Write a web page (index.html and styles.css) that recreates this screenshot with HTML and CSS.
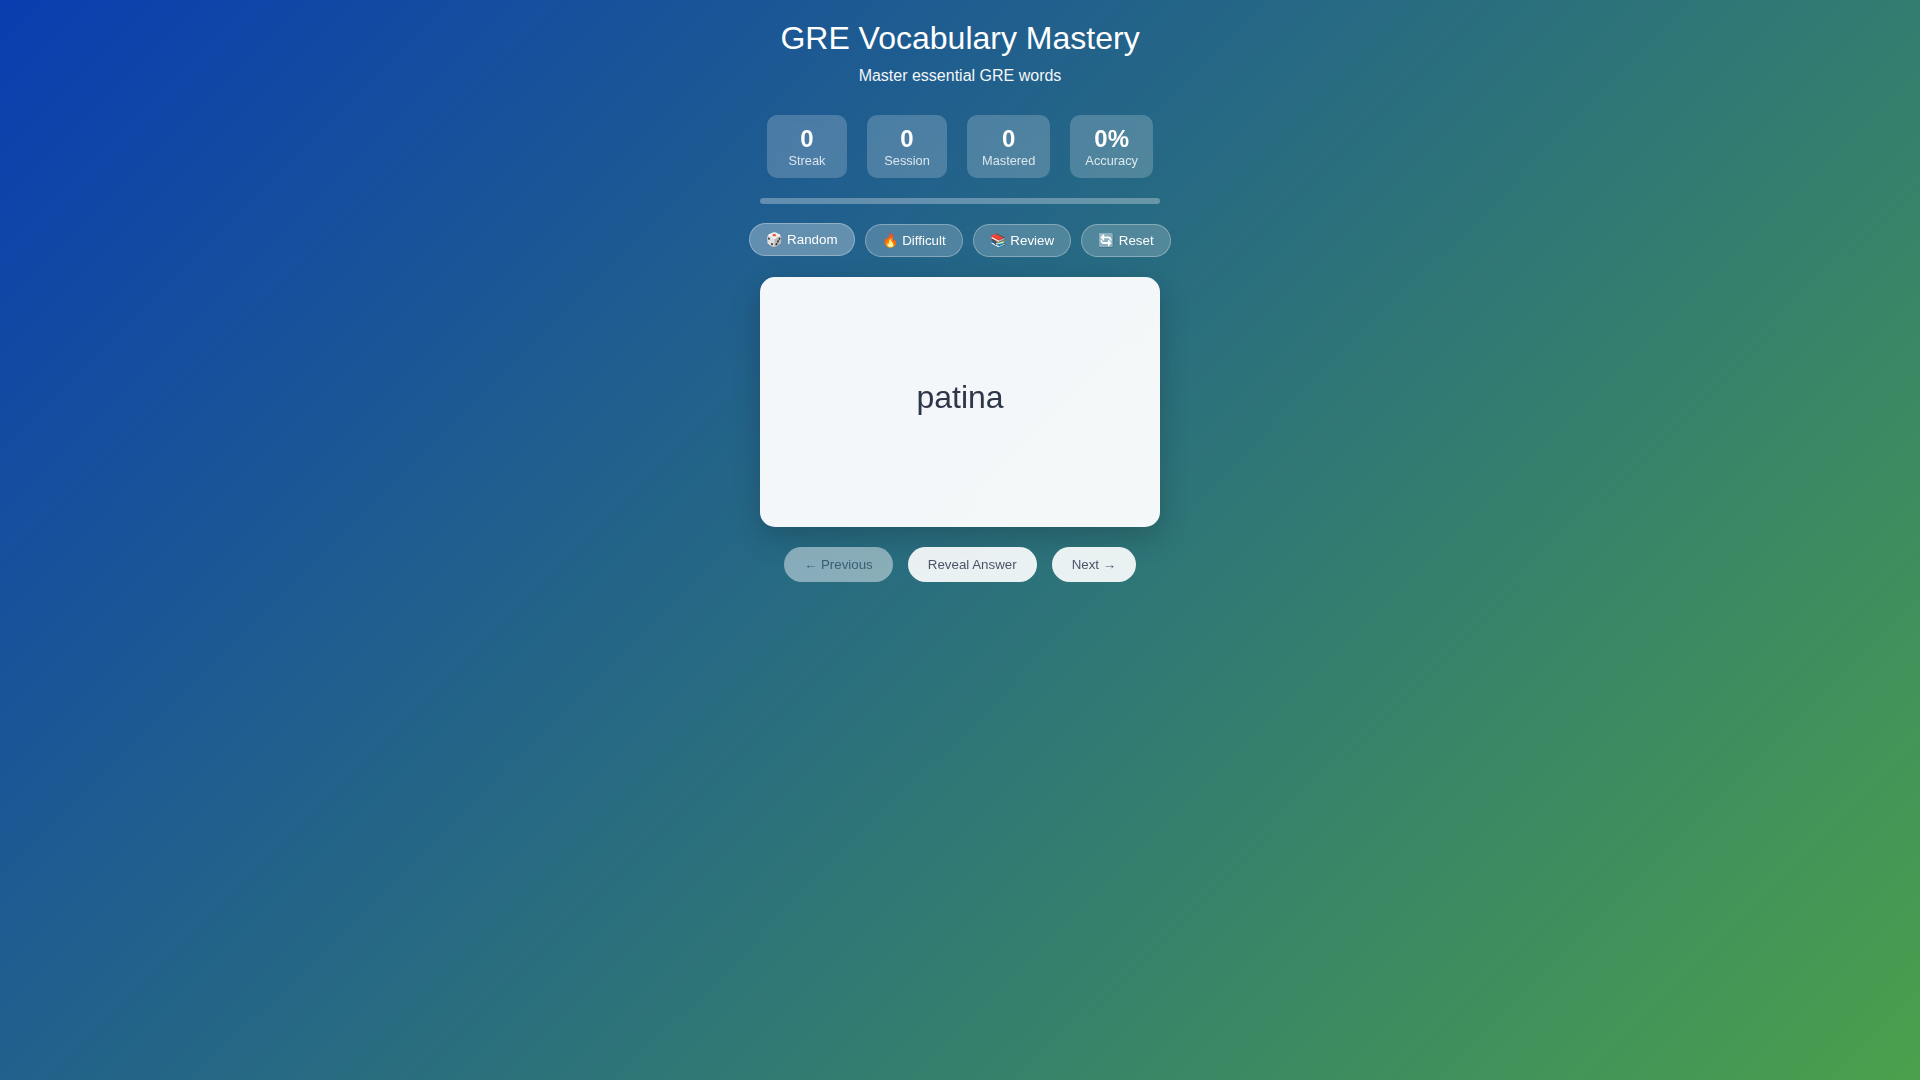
FILE: index.html
```html
<!DOCTYPE html>
<html lang="en">
<head>
<meta charset="utf-8">
<title>GRE Vocabulary Mastery</title>
<link rel="stylesheet" href="styles.css">
</head>
<body>
<main class="app">
  <header class="header">
    <h1 class="title">GRE Vocabulary Mastery</h1>
    <p class="subtitle">Master essential GRE words</p>
  </header>
  <section class="stats">
    <div class="stat"><div class="stat-value">0</div><div class="stat-label">Streak</div></div>
    <div class="stat"><div class="stat-value">0</div><div class="stat-label">Session</div></div>
    <div class="stat"><div class="stat-value">0</div><div class="stat-label">Mastered</div></div>
    <div class="stat"><div class="stat-value">0%</div><div class="stat-label">Accuracy</div></div>
  </section>
  <div class="progress"></div>
  <nav class="modes">
    <button class="mode mode-active">🎲 Random</button>
    <button class="mode">🔥 Difficult</button>
    <button class="mode">📚 Review</button>
    <button class="mode">🔄 Reset</button>
  </nav>
  <section class="card"><div class="word">patina</div></section>
  <div class="actions">
    <button class="action action-disabled">← Previous</button>
    <button class="action">Reveal Answer</button>
    <button class="action">Next →</button>
  </div>
</main>
</body>
</html>
```
FILE: styles.css
```css
* { box-sizing: border-box; margin: 0; padding: 0; }
html, body { height: 100%; }
body {
  min-height: 100vh;
  background: linear-gradient(135deg, #0a3db0 0%, #4aa04c 100%);
  font-family: "Liberation Sans", Arial, sans-serif;
  color: #fff;
  overflow: hidden;
}
.app {
  width: 400px;
  margin: 0 auto;
  padding-top: 20px;
  display: flex;
  flex-direction: column;
  align-items: center;
}
.header { text-align: center; margin-bottom: 30px; white-space: nowrap; }
.title { font-size: 32px; font-weight: 400; line-height: 37px; margin-bottom: 10px; }
.subtitle { font-size: 16px; line-height: 18px; opacity: .95; }
.stats { display: flex; justify-content: center; gap: 20px; margin-bottom: 20px; }
.stat {
  min-width: 80px;
  background: rgba(255,255,255,.2);
  backdrop-filter: blur(10px);
  border-radius: 10px;
  padding: 10px 15px;
  text-align: center;
}
.stat-value { font-size: 24px; line-height: 28px; font-weight: 700; }
.stat-label { font-size: 12.8px; line-height: 15px; opacity: .8; }
.progress {
  width: 100%;
  height: 6px;
  border-radius: 3px;
  background: rgba(255,255,255,.3);
  margin-bottom: 20px;
}
.modes { display: flex; justify-content: center; gap: 10px; margin-bottom: 20px; white-space: nowrap; }
.mode {
  font: 13.333px "Liberation Sans", Arial, sans-serif;
  color: #fff;
  background: rgba(255,255,255,.2);
  backdrop-filter: blur(10px);
  border: 1px solid rgba(255,255,255,.3);
  border-radius: 20px;
  padding: 8px 16px;
}
.mode-active { background: rgba(255,255,255,.3); transform: translateY(-1px); }
.card {
  width: 100%;
  height: 250px;
  background: rgba(255,255,255,.95);
  backdrop-filter: blur(10px);
  border-radius: 15px;
  box-shadow: 0 10px 30px rgba(0,0,0,.2);
  margin-bottom: 20px;
  display: flex;
  flex-direction: column;
  align-items: center;
  justify-content: center;
}
.word { font-size: 32px; line-height: 37px; color: #2d3748; margin-bottom: 10px; }
.actions { display: flex; justify-content: center; gap: 15px; white-space: nowrap; }
.action {
  font: 13.333px "Liberation Sans", Arial, sans-serif;
  color: #4a5568;
  background: rgba(255,255,255,.9);
  backdrop-filter: blur(10px);
  border: 0;
  border-radius: 25px;
  padding: 10px 20px;
}
.action-disabled { opacity: .5; }
```
